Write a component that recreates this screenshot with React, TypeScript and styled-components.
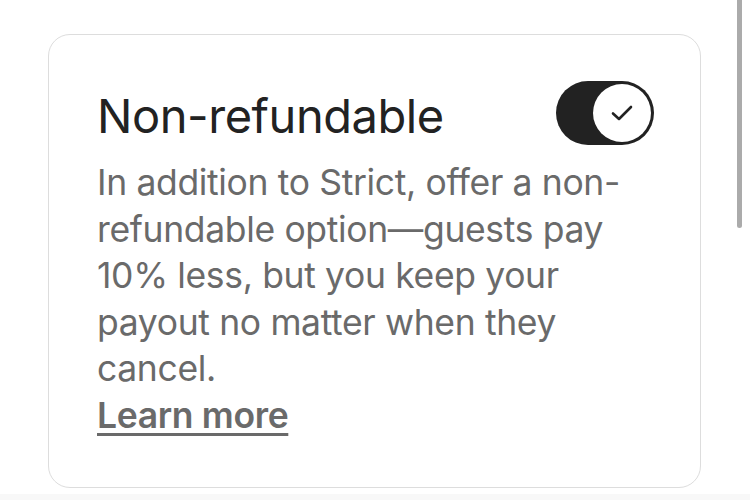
import React from "react";
import styled, { createGlobalStyle } from "styled-components";

const Global = createGlobalStyle`
  html, body { margin: 0; padding: 0; background: #ffffff; }
  body { font-family: "Inter", "Liberation Sans", sans-serif; -webkit-font-smoothing: antialiased; }
`;

const Page = styled.div`
  position: relative;
  width: 750px;
  height: 500px;
  box-sizing: border-box;
  padding: 34px 49px 0 48px;
  background: linear-gradient(#ffffff 0, #ffffff 494px, #f8f8f8 494px);
  overflow: hidden;
`;

const ScrollThumb = styled.div`
  position: absolute;
  top: -6px;
  left: 737px;
  width: 5px;
  height: 234px;
  border-radius: 3px;
  background: #ababab;
`;

const Card = styled.section`
  box-sizing: border-box;
  width: 653px;
  height: 454px;
  border: 1.5px solid #dddddd;
  border-radius: 22px;
  padding: 46px 46px 0 48px;
  background: #ffffff;
`;

const Header = styled.div`
  display: flex;
  align-items: flex-start;
  justify-content: space-between;
`;

const Title = styled.h2`
  margin: 6.5px 0 0;
  font-size: 47px;
  line-height: 56px;
  font-weight: 400;
  color: #222222;
  letter-spacing: -0.45px;
`;

const Toggle = styled.button`
  position: relative;
  width: 98px;
  height: 64px;
  margin-top: 0;
  border: none;
  padding: 0;
  border-radius: 32px;
  background: #222222;
`;

const Knob = styled.span`
  position: absolute;
  top: 3px;
  right: 3px;
  width: 58px;
  height: 58px;
  border-radius: 50%;
  background: #ffffff;
  display: flex;
  align-items: center;
  justify-content: center;
`;

const Body = styled.p`
  margin: 15px 0 0;
  font-size: 35.5px;
  line-height: 46.5px;
  color: #6a6a6a;
  letter-spacing: -0.35px;
  max-width: 535px;
`;

const Link = styled.a`
  display: inline-block;
  font-size: 35.5px;
  line-height: 46.5px;
  font-weight: 600;
  color: #6a6a6a;
  text-decoration: underline;
  text-decoration-thickness: 3px;
  text-underline-offset: 5px;
  letter-spacing: -0.35px;
`;

export default function App() {
  return (
    <>
      <Global />
      <Page>
        <Card>
          <Header>
            <Title>Non-refundable</Title>
            <Toggle aria-pressed="true">
              <Knob>
                <svg width="22" height="16" viewBox="0 0 22 16" fill="none">
                  <path d="M2 8.5 L8 14 L20 2" stroke="#222" strokeWidth="2.6" strokeLinecap="round" strokeLinejoin="round" />
                </svg>
              </Knob>
            </Toggle>
          </Header>
          <Body>
            In addition to Strict, offer a non-refundable option—guests pay 10% less, but you keep your payout no matter when they cancel.
            <br />
            <Link>Learn more</Link>
          </Body>
        </Card>
        <ScrollThumb />
      </Page>
    </>
  );
}
